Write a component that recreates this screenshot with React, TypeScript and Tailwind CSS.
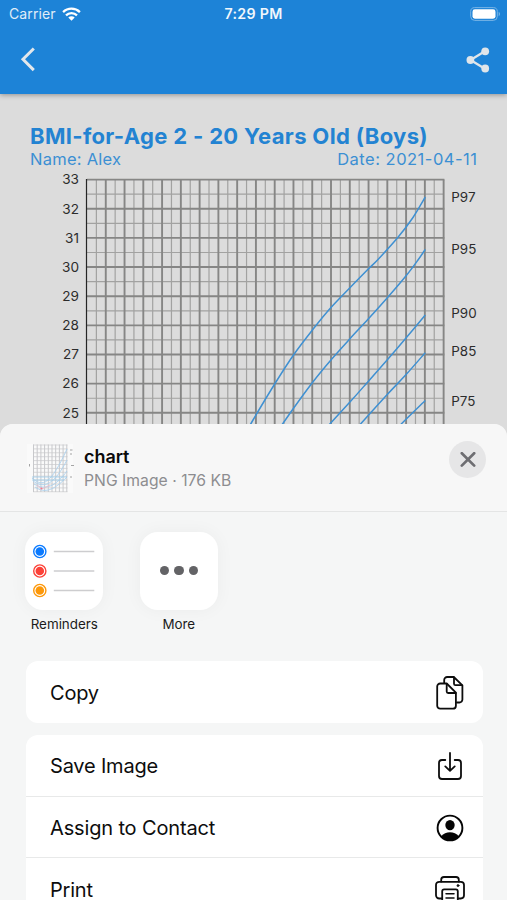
import type { ReactNode } from "react";

const LEFT = 87;
const TOP = 179.6;
const COL = 18.77;
const ROW = 29.15;

const curves = [
  { label: "P97", y: 197, pts: [[425.3, 197], [413, 217.5], [398, 237.3], [378, 259.5], [368, 269.3], [349.7, 288], [330.3, 308.3], [313, 329.3], [293, 355.7], [274.7, 384], [253, 420], [243, 438]] },
  { label: "P95", y: 249.5, pts: [[425.3, 249.3], [418, 260], [406.3, 275.5], [388, 297], [368, 319.3], [349.7, 339], [330.3, 360.7], [312.3, 382.7], [293, 409], [273, 438]] },
  { label: "P90", y: 313.5, pts: [[425.3, 315], [406, 338], [388, 359], [368, 381.7], [349.7, 402.3], [318, 437]] },
  { label: "P85", y: 351.7, pts: [[425.3, 352.7], [406.3, 374.3], [387, 394.8], [361, 423.5], [350, 436]] },
  { label: "P75", y: 401, pts: [[425.3, 400.5], [401.3, 424], [390, 436]] },
];

// Catmull-Rom spline through the sampled percentile points
function spline(p: number[][]) {
  let d = `M${p[0][0]} ${p[0][1]}`;
  for (let i = 0; i < p.length - 1; i++) {
    const a = p[i - 1] ?? p[i];
    const b = p[i];
    const c = p[i + 1];
    const e = p[i + 2] ?? c;
    d += `C${b[0] + (c[0] - a[0]) / 6} ${b[1] + (c[1] - a[1]) / 6} ${c[0] - (e[0] - b[0]) / 6} ${c[1] - (e[1] - b[1]) / 6} ${c[0]} ${c[1]}`;
  }
  return d;
}

function Chart() {
  const right = LEFT + COL * 19;
  return (
    <svg className="block h-[270px] w-[507px]" viewBox="0 170 507 270">
      {Array.from({ length: 19 }, (_, i) => (
        <path key={i} d={`M${LEFT + COL * (i + 0.5)} ${TOP}V440`} stroke="#a2a2a1" strokeWidth="1.2" />
      ))}
      {Array.from({ length: 9 }, (_, i) => (
        <path key={i} d={`M${LEFT} ${TOP + ROW * (i + 0.5)}H${right}`} stroke="#a2a2a1" strokeWidth="1.2" />
      ))}
      {Array.from({ length: 19 }, (_, i) => (
        <path key={i} d={`M${LEFT + COL * (i + 1)} ${TOP}V440`} stroke="#868685" strokeWidth="1.9" />
      ))}
      {Array.from({ length: 9 }, (_, i) => (
        <path key={i} d={`M${LEFT} ${TOP + ROW * i}H${right + 0.7}`} stroke="#868685" strokeWidth="1.9" />
      ))}
      <path d={`M86.5 ${TOP - 0.6}V440`} stroke="#262626" strokeWidth="1.2" />
      {curves.map((c) => (
        <path key={c.label} d={spline(c.pts)} fill="none" stroke="#3e90d2" strokeWidth="1.5" />
      ))}
      {Array.from({ length: 9 }, (_, i) => (
        <text key={i} x="79" y={TOP + ROW * i + 4.8} textAnchor="end" className="fill-[#2c2c2c] text-[13.6px]">
          {33 - i}
        </text>
      ))}
      {curves.map((c) => (
        <text key={c.label} x="451.3" y={c.y + 4.6} className="fill-[#2c2c2c] text-[13.4px]">
          {c.label}
        </text>
      ))}
    </svg>
  );
}

function Thumbnail() {
  return (
    <svg className="h-[49px] w-[49px]" viewBox="0 0 49 49">
      <rect x="1" width="46" height="49" fill="#fafafa" />
      {Array.from({ length: 10 }, (_, i) => (
        <path key={i} d={`M${7.5 + i * 3.7} 0.5V48`} stroke="#c2c3c6" strokeWidth="0.9" />
      ))}
      {Array.from({ length: 13 }, (_, i) => (
        <path key={i} d={`M7 ${1 + i * 3.9}H41.5`} stroke="#c8c9cc" strokeWidth="0.7" />
      ))}
      <path d="M6 34C17 44 25 40 41 5M7 37C18 45 28 41 41 16M8 40C20 47 30 42 41 27M9 43C19 50 28 46 41 33" fill="none" stroke="#abd1ee" strokeWidth="0.9" />
      <path d="M6 33H41M6 36H38" stroke="#9dceee" strokeWidth="0.8" />
      <path d="M11 41L16 45L24 41" fill="none" stroke="#efb8c4" strokeWidth="0.8" />
      <circle cx="15.5" cy="44.5" r="1" fill="#ee7a92" />
      <path d="M3.5 20v2.5M45 21.5h3M44 6h2.5M44 10h2M44 33h2" stroke="#9a9a9a" strokeWidth="0.9" />
    </svg>
  );
}

const stroke = { fill: "none", stroke: "#0d0d0d", strokeWidth: 1.8, strokeLinecap: "round", strokeLinejoin: "round" } as const;

function CopyIcon() {
  return (
    <svg className="h-[34px] w-7" viewBox="0 0 28 34" {...stroke}>
      <path d="M8.2 7V4a3 3 0 0 1 3-3h6.6l8.6 8.3v14.2a3 3 0 0 1-3 3h-2.5" />
      <path d="M18 1.3V7.7a1.5 1.5 0 0 0 1.5 1.5h6.4" />
      <path d="M4.2 7.5h6.5l9.2 9.2v13a3 3 0 0 1-3 3H4.2a3 3 0 0 1-3-3V10.5a3 3 0 0 1 3-3Z" />
      <path d="M10.7 7.8V15.5a1.5 1.5 0 0 0 1.5 1.5h7.5" />
    </svg>
  );
}

function SaveIcon() {
  return (
    <svg className="h-7 w-6" viewBox="0 0 24 28" {...stroke}>
      <path d="M7.3 8H4a3 3 0 0 0-3 3V24a3 3 0 0 0 3 3H20a3 3 0 0 0 3-3V11a3 3 0 0 0-3-3H16.7" />
      <path d="M12 1V18.3M7.3 14.4L12 18.8L16.7 14.4" />
    </svg>
  );
}

function ContactIcon() {
  return (
    <svg className="h-7 w-7" viewBox="0 0 28 28">
      <circle cx="14" cy="14" r="12.4" fill="none" stroke="#050505" strokeWidth="1.9" />
      <ellipse cx="14" cy="11.1" rx="4.7" ry="5.2" fill="#050505" />
      <path d="M5.2 22.2C7.4 19.3 10.6 18.2 14 18.2s6.6 1.1 8.8 4A12.3 12.3 0 0 1 14 26.2a12.3 12.3 0 0 1-8.8-4Z" fill="#050505" />
    </svg>
  );
}

function PrintIcon() {
  return (
    <svg className="h-7 w-[30px]" viewBox="0 0 30 28" {...stroke}>
      <path d="M6.2 5.5V3.8A2.8 2.8 0 0 1 9 1H21a2.8 2.8 0 0 1 2.8 2.8V5.5" />
      <path d="M7.2 22.5H4.2A3.2 3.2 0 0 1 1 19.3V9A3.2 3.2 0 0 1 4.2 5.8H25.8A3.2 3.2 0 0 1 29 9V19.3a3.2 3.2 0 0 1-3.2 3.2H22.8" />
      <path d="M7.2 27V15.3a2 2 0 0 1 2-2H20.8a2 2 0 0 1 2 2V27Z" />
      <path d="M11 17.8H19M11 22H19" strokeWidth="1.5" />
      <circle cx="23" cy="9.6" r="1" fill="#0d0d0d" strokeWidth="0.8" />
    </svg>
  );
}

function Row({ label, icon, spacing }: { label: string; icon: ReactNode; spacing: string }) {
  return (
    <div className="flex h-[61.5px] items-center justify-between pl-[24.5px] pt-[1.5px]">
      <span className={`text-[20px] text-[#0d0d0d] ${spacing}`}>{label}</span>
      <span className="flex w-[65px] justify-center">{icon}</span>
    </div>
  );
}

function AppTile({ label, children }: { label: string; children: ReactNode }) {
  return (
    <div className="flex w-[78px] flex-col items-center">
      <div className="flex h-[78px] w-[78px] items-center justify-center rounded-[18px] bg-white shadow-[0_0_18px_rgba(0,0,0,0.045)]">
        {children}
      </div>
      <span className="mt-[4.5px] text-[13.4px] leading-5 text-[#1b1b1b]">{label}</span>
    </div>
  );
}

export default function App() {
  return (
    <div className="relative h-[900px] w-[507px] overflow-hidden bg-[#dcdcdc] font-['Inter','Liberation_Sans',sans-serif]">
      <header className="relative h-[94px] bg-[#1d83d7] shadow-[0_1px_5px_rgba(0,0,0,0.35)]">
        <div className="grid h-7 grid-cols-3 items-center">
          <div className="flex items-center gap-[6px] pl-[9px] text-[#e0edf8]">
            <span className="text-[14px] leading-7 tracking-[0.1px]">Carrier</span>
            <svg className="h-[14px] w-[19px]" viewBox="0 0 19 14" fill="none" stroke="#fff" strokeWidth="2.3">
              <path d="M1.1 5.1A12 12 0 0 1 17.9 5.1" />
              <path d="M4 8.3A7.9 7.9 0 0 1 15 8.3" />
              <path d="M9.5 13.8L6.3 10.6a4.5 4.5 0 0 1 6.4 0Z" fill="#fff" stroke="none" />
            </svg>
          </div>
          <span className="text-center text-[14.2px] font-semibold leading-7 tracking-[0.3px] text-[#f1f7fc]">7:29 PM</span>
          <svg className="mr-[6px] h-[14px] w-[31px] justify-self-end" viewBox="0 0 31 14">
            <rect x="0.7" y="0.6" width="26.6" height="12.8" rx="4" fill="none" stroke="#78b4e6" strokeWidth="1" />
            <rect x="2.5" y="2.3" width="23" height="9.4" rx="2.4" fill="#fff" />
            <path d="M28.7 4.8a2.5 2.5 0 0 1 0 4.4Z" fill="#78b4e6" />
          </svg>
        </div>
        <div className="flex h-[63px] items-center justify-between pl-5 pr-[17px]">
          <svg className="h-[25px] w-4" viewBox="0 0 16 25" fill="none" stroke="#e3e7eb" strokeWidth="3">
            <path d="M13.8 1.5L3 12.3L13.8 23.1" />
          </svg>
          <svg className="h-[26px] w-6" viewBox="0 0 24 26" fill="#dfe5ea" stroke="#dfe5ea">
            <path d="M18.5 4.5L4.5 13L18.5 21.5" fill="none" strokeWidth="2.3" />
            <circle cx="19.2" cy="4.3" r="3.9" stroke="none" />
            <circle cx="4.4" cy="13" r="3.9" stroke="none" />
            <circle cx="19.2" cy="21.5" r="3.9" stroke="none" />
          </svg>
        </div>
      </header>

      <main>
        <div className="flex h-[76px] flex-col px-[30px] pt-[28px] text-[#2383d2]">
          <h1 className="whitespace-nowrap text-[22px] font-bold leading-7 tracking-[0.34px]">BMI-for-Age 2 - 20 Years Old (Boys)</h1>
          <div className="flex justify-between whitespace-nowrap text-[16.5px] leading-[18px] text-[#3b8fd3]">
            <span className="tracking-[0.25px]">Name: Alex</span>
            <span className="-mr-[0.5px] tracking-[0.5px]">Date: 2021-04-11</span>
          </div>
        </div>
        <Chart />
      </main>

      <section className="absolute inset-x-0 bottom-0 top-[424px] overflow-hidden rounded-t-[13px] bg-[#f5f6f6]">
        <div className="flex h-[88px] items-start border-b border-[#e4e5e5] bg-[#f7f7f7] pl-[26px] pr-[21px] pt-[17px]">
          <div className="pt-[3px]">
            <Thumbnail />
          </div>
          <div className="ml-[9px] flex grow flex-col pt-1">
            <span className="text-[18px] font-semibold leading-[23px] tracking-[-0.05px] text-[#0a0a0a]">chart</span>
            <span className="text-[15.7px] leading-[25px] tracking-[0.03px] text-[#8d8d90]">PNG Image · 176 KB</span>
          </div>
          <button aria-label="Close" className="flex h-[37px] w-[37px] items-center justify-center rounded-full bg-[#e6e6e7]">
            <svg className="h-4 w-4" viewBox="0 0 16 16" stroke="#6e6e72" strokeWidth="2.7" strokeLinecap="round">
              <path d="M1.8 1.2L14.2 13.6M14.2 1.2L1.8 13.6" />
            </svg>
          </button>
        </div>

        <div className="flex h-[149px] gap-[36.5px] pl-[25.3px] pt-[19.5px]">
          <AppTile label="Reminders">
            <svg className="h-[78px] w-[78px]" viewBox="0 0 78 78">
              {["#0a7aff", "#fc4238", "#fd9809"].map((color, i) => (
                <g key={color} transform={`translate(14.8 ${19.5 + i * 19.5})`}>
                  <circle r="6.1" fill="white" stroke={color} strokeWidth="1.4" />
                  <circle r="4.3" fill={color} />
                  <path d="M14 0H54.5" stroke="#cdcdcf" strokeWidth="1.5" />
                </g>
              ))}
            </svg>
          </AppTile>
          <AppTile label="More">
            <div className="flex gap-[5px]">
              <i className="h-[9.5px] w-[9.5px] rounded-full bg-[#636366]" />
              <i className="h-[9.5px] w-[9.5px] rounded-full bg-[#636366]" />
              <i className="h-[9.5px] w-[9.5px] rounded-full bg-[#636366]" />
            </div>
          </AppTile>
        </div>

        <div className="flex flex-col gap-3 pl-[25.5px] pr-[24.5px]">
          <div className="h-[62px] rounded-xl bg-white">
            <Row label="Copy" icon={<CopyIcon />} spacing="tracking-[-0.2px]" />
          </div>
          <div className="divide-y divide-[#e8e9e9] rounded-xl bg-white">
            <Row label="Save Image" icon={<SaveIcon />} spacing="tracking-[-0.2px]" />
            <Row label="Assign to Contact" icon={<ContactIcon />} spacing="tracking-[-0.15px]" />
            <Row label="Print" icon={<PrintIcon />} spacing="tracking-[-0.2px]" />
          </div>
        </div>
      </section>
    </div>
  );
}
